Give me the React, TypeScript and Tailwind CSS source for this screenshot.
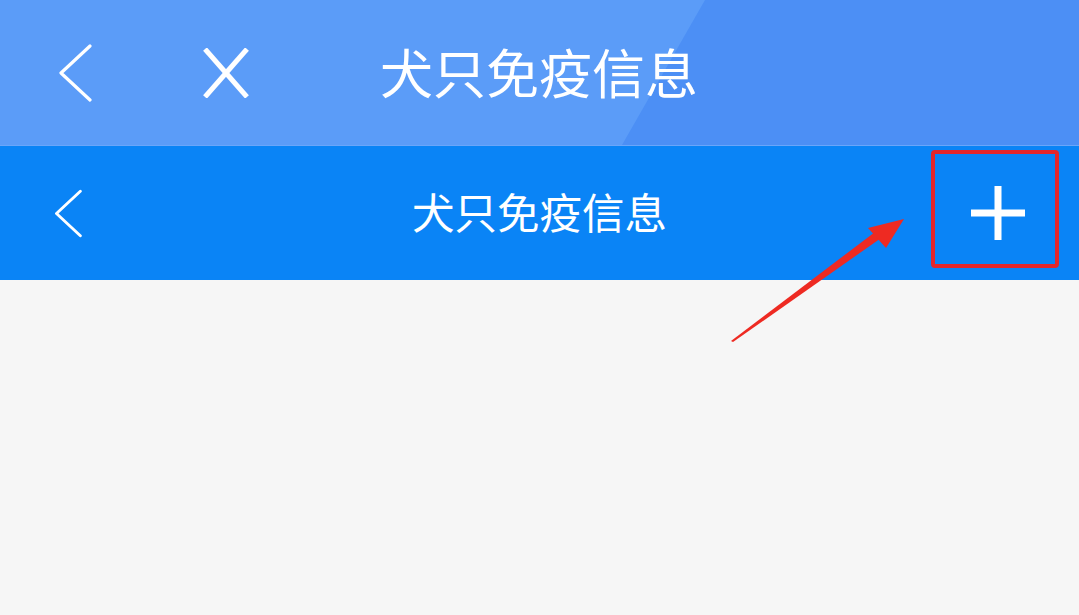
import React from "react";

function Chevron({ className, stroke = 3.5 }: { className?: string; stroke?: number }) {
	return (
		<svg viewBox="0 0 34 58" className={className} fill="none">
			<polyline
				points="32,2 3,29 32,56"
				stroke="white"
				strokeWidth={stroke}
				strokeLinecap="round"
				strokeLinejoin="round"
			/>
		</svg>
	);
}

export default function App() {
	return (
		<div
			className="relative w-[1079px] h-[615px] bg-[#f6f6f6] overflow-hidden"
			style={{ fontFamily: '"Noto Sans CJK SC", "Noto Sans", sans-serif' }}
		>
			{/* outer browser-ish header */}
			<div className="relative h-[145px] bg-[#5b9cf8] flex items-center text-white">
				<svg
					className="absolute inset-0 w-full h-full"
					viewBox="0 0 1079 145"
					preserveAspectRatio="none"
				>
					<polygon points="705,0 1079,0 1079,145 622,145" fill="#4c8ff5" />
				</svg>
				<div className="relative flex items-center">
					<div className="ml-[58px] w-[34px] h-[58px]">
						<Chevron className="w-[34px] h-[58px]" stroke={3.2} />
					</div>
					<div className="ml-[109px] w-[50px] h-[50px]">
						<svg viewBox="0 0 50 50" className="w-[50px] h-[50px]">
							<line x1="4" y1="1" x2="46" y2="49" stroke="white" strokeWidth="5" />
							<line x1="46" y1="1" x2="4" y2="49" stroke="white" strokeWidth="5" />
						</svg>
					</div>
					<span className="ml-[129px] -mt-[3px] text-[53px] leading-none">
						犬只免疫信息
					</span>
				</div>
			</div>
			<div className="h-px bg-[#6aa6fa]" />

			{/* app nav bar */}
			<div className="relative h-[134px] bg-[#0a84f6] flex items-center justify-between text-white">
				<div className="ml-[54px] w-[28px] h-[49px]">
					<Chevron className="w-[28px] h-[49px]" stroke={3.5} />
				</div>
				<span className="absolute left-1/2 -translate-x-1/2 -mt-[3px] text-[42.5px] leading-none">
					犬只免疫信息
				</span>
				<div className="self-start mt-[4px] mr-[20px] w-[128px] h-[118px] border-[4px] border-[#e3262b] rounded-[4px] flex items-center justify-center">
					<svg viewBox="0 0 54 54" className="w-[54px] h-[54px] ml-[6px] mt-[8px]">
						<rect x="23.5" y="0" width="7" height="54" fill="white" />
						<rect x="0" y="23.5" width="54" height="7" fill="white" />
					</svg>
				</div>
			</div>

			{/* annotation arrow */}
			<svg
				className="absolute left-0 top-0 w-[1079px] h-[615px] pointer-events-none"
				viewBox="0 0 1079 615"
			>
				<polygon points="731,341 733,342 884,236 879,229" fill="#ee2a22" />
				<polygon points="904,219 868,228 886,248" fill="#ee2a22" />
			</svg>
		</div>
	);
}
